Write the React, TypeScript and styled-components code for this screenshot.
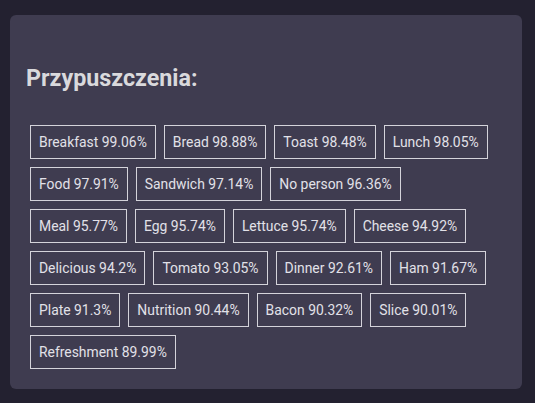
import React from "react";
import styled, { createGlobalStyle } from "styled-components";

const Global = createGlobalStyle`
  html, body { margin: 0; padding: 0; background: #232130; }
  body { font-family: Roboto, "Liberation Sans", sans-serif; }
`;

const Page = styled.div`
  width: 535px;
  height: 403px;
  padding: 15px 13px 0 10px;
  box-sizing: border-box;
  background: #232130;
`;

const Panel = styled.section`
  background: #3f3c50;
  border-radius: 6px;
  padding: 48px 16px 18px 16px;
  box-sizing: border-box;
  height: 374px;
`;

const Title = styled.h2`
  margin: 0 0 32px 0;
  font-family: Roboto, sans-serif;
  font-weight: 700;
  font-size: 23.3px;
  line-height: 30px;
  color: #d9d9dc;
`;

const TagList = styled.div`
  display: flex;
  flex-wrap: wrap;
  gap: 8px 8px;
  padding: 0 14px 0 4px;
`;

const Tag = styled.span`
  display: inline-flex;
  align-items: center;
  height: 34px;
  box-sizing: border-box;
  padding: 0 8px;
  border: 1px solid #d4d3da;
  font-family: Roboto, sans-serif;
  font-size: 13.9px;
  color: #e2e1e8;
  white-space: nowrap;
`;

const tags: [string, string][] = [
  ["Breakfast", "99.06"],
  ["Bread", "98.88"],
  ["Toast", "98.48"],
  ["Lunch", "98.05"],
  ["Food", "97.91"],
  ["Sandwich", "97.14"],
  ["No person", "96.36"],
  ["Meal", "95.77"],
  ["Egg", "95.74"],
  ["Lettuce", "95.74"],
  ["Cheese", "94.92"],
  ["Delicious", "94.2"],
  ["Tomato", "93.05"],
  ["Dinner", "92.61"],
  ["Ham", "91.67"],
  ["Plate", "91.3"],
  ["Nutrition", "90.44"],
  ["Bacon", "90.32"],
  ["Slice", "90.01"],
  ["Refreshment", "89.99"],
];

export default function App() {
  return (
    <>
      <Global />
      <Page>
        <Panel>
          <Title>Przypuszczenia:</Title>
          <TagList>
            {tags.map(([name, pct]) => (
              <Tag key={name}>
                {name} {pct}%
              </Tag>
            ))}
          </TagList>
        </Panel>
      </Page>
    </>
  );
}
